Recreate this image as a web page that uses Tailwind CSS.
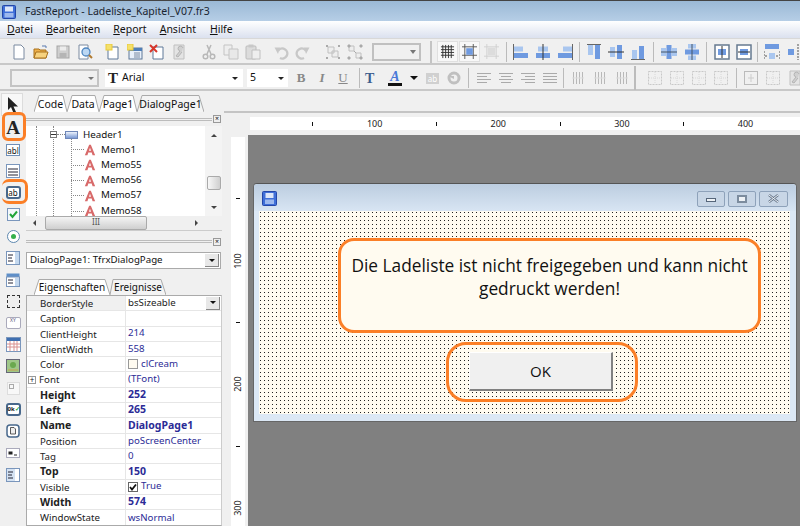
<!DOCTYPE html>
<html lang="de">
<head>
  <meta charset="UTF-8" />
  <title>FastReport</title>
  <script src="https://cdn.jsdelivr.net/npm/@tailwindcss/browser@4"></script>
</head>
<body class="relative w-[800px] h-[526px] overflow-hidden bg-[#f0f0f0] text-[#111] font-['Noto_Sans',sans-serif] text-[10.5px]">

  <!-- Title bar -->
  <div class="h-[21px] flex items-center gap-[9px] pl-[2px] pt-[1px] border-t border-[#444] bg-gradient-to-b from-[#9bb9d6] to-[#b6cee6]">
    <svg class="w-[14px] h-[14px]" viewBox="0 0 14 14"><rect x=".5" y=".5" width="13" height="13" rx="1" fill="#3f6fd8" stroke="#2346a8"/><rect x="3" y="1.5" width="8" height="5" fill="#dce6f8"/><rect x="2.5" y="8" width="9" height="4.5" fill="#9db9ee"/></svg>
    <span class="text-[#1a2430] text-[10.5px]">FastReport - Ladeliste_Kapitel_V07.fr3</span>
  </div>

  <!-- Menu -->
  <div class="h-[17px] flex items-center gap-[13px] pl-[7px] bg-gradient-to-b from-white to-[#dbe1ef] text-[10.5px]">
    <span><u>D</u>atei</span><span><u>B</u>earbeiten</span><span><u>R</u>eport</span><span><u>A</u>nsicht</span><span class="ml-[1px]"><u>H</u>ilfe</span>
  </div>

  <svg class="hidden">
    <symbol id="doc" viewBox="0 0 16 16"><path d="M3 1h7l3 3v11H3z" fill="#fff" stroke="#7a8aa0"/></symbol>
    <symbol id="open" viewBox="0 0 16 16"><path d="M1 5h5l1 1h6v8H1z" fill="#eeb04a" stroke="#a8711c"/><path d="M1 14l2-6h12l-2 6z" fill="#f7d27e" stroke="#a8711c"/><path d="M9 2h4v2" fill="none" stroke="#5a7ab0"/></symbol>
    <symbol id="save" viewBox="0 0 16 16"><rect x="2" y="2" width="12" height="12" fill="#cfcfcf" stroke="#a5a5a5"/><rect x="5" y="2.5" width="6" height="4" fill="#ececec"/><rect x="4.500" y="9" width="7" height="5" fill="#b5b5b5"/></symbol>
    <symbol id="find" viewBox="0 0 16 16"><path d="M2 1h9v14H2z" fill="#fff" stroke="#7a8aa0"/><circle cx="9" cy="8" r="4" fill="#bcd8f4" stroke="#4f86c0" stroke-width="1.300"/><path d="M12 11l3 3" stroke="#b07a30" stroke-width="2"/></symbol>
    <symbol id="newp" viewBox="0 0 16 16"><path d="M3 3h10v12H3z" fill="#fff" stroke="#5f7898"/><rect x="1" y="0" width="6" height="6" fill="#f4e06a" stroke="#e8c93c"/></symbol>
    <symbol id="newd" viewBox="0 0 16 16"><rect x="2" y="4" width="13" height="11" fill="#e8f0fa" stroke="#5f7898"/><rect x="2" y="4" width="13" height="3" fill="#4f7fb8"/><path d="M7 9h6M7 11h6M7 13h6" stroke="#7a8aa0"/><rect x="0" y="0" width="6" height="6" fill="#f4e06a" stroke="#e8c93c"/></symbol>
    <symbol id="delp" viewBox="0 0 16 16"><path d="M4 3h10v12H4z" fill="#fff" stroke="#5f7898"/><path d="M1 1l7 7M8 1L1 8" stroke="#d8362a" stroke-width="2"/></symbol>
    <symbol id="setup" viewBox="0 0 16 16"><path d="M3 1h10v14H3z" fill="#e4e4e4" stroke="#c0c0c0"/><path d="M12 4a2.500 2.500 0 1 0-3 3l-4 5 2 1 4-5" fill="#d0d0d0" stroke="#b4b4b4"/></symbol>
    <symbol id="cut" viewBox="0 0 16 16"><path d="M10 1L6 10M6 1l4 9" stroke="#b8b8b8" stroke-width="1.500"/><circle cx="4.500" cy="12.500" r="2.300" fill="none" stroke="#b8b8b8" stroke-width="1.500"/><circle cx="11.500" cy="12.500" r="2.300" fill="none" stroke="#b8b8b8" stroke-width="1.500"/></symbol>
    <symbol id="copy" viewBox="0 0 16 16"><path d="M1 1h8v10H1z" fill="#eee" stroke="#c4c4c4"/><path d="M6 5h9v10H6z" fill="#e8e8e8" stroke="#c4c4c4"/></symbol>
    <symbol id="paste" viewBox="0 0 16 16"><rect x="1" y="2" width="10" height="13" rx="1" fill="#dcdcdc" stroke="#bcbcbc"/><path d="M7 6h8v9H7z" fill="#eee" stroke="#c0c0c0"/><rect x="3.500" y="0.500" width="5" height="3" fill="#c8c8c8"/></symbol>
    <symbol id="undo" viewBox="0 0 16 16"><path d="M5 7a5 5 0 1 1 2 7" fill="none" stroke="#c8c8c8" stroke-width="2.400"/><path d="M1.500 3.500L7 3.500 5 10z" fill="#c8c8c8"/></symbol>
    <symbol id="redo" viewBox="0 0 16 16"><path d="M11 7a5 5 0 1 0-2 7" fill="none" stroke="#c8c8c8" stroke-width="2.400"/><path d="M14.500 3.500L9 3.500 11 10z" fill="#c8c8c8"/></symbol>
    <symbol id="grp" viewBox="0 0 16 16"><path d="M3 3h6v6H3zM7 7h6v6H7z" fill="#eee" stroke="#c0c0c0"/><path d="M1 1h2v2H1zM13 1h2v2h-2zM1 13h2v2H1zM13 13h2v2h-2z" fill="#aaa"/></symbol>
    <symbol id="ungrp" viewBox="0 0 16 16"><path d="M2 2h5v5H2zM9 9h5v5H9z" fill="#eee" stroke="#c0c0c0"/><path d="M7 7l2 2M1 1h2v2H1zM13 1h2v2h-2zM1 13h2v2H1zM13 13h2v2h-2z" fill="#aaa" stroke="#aaa"/></symbol>
    <symbol id="grid" viewBox="0 0 16 16"><path d="M3 1v14M6 1v14M9 1v14M12 1v14M1 3h14M1 6h14M1 9h14M1 12h14" stroke="#333"/></symbol>
    <symbol id="galign" viewBox="0 0 16 16"><path d="M3 0v16M12 0v16M0 3h16M0 12h16" stroke="#555"/><rect x="4.500" y="4.500" width="7" height="7" fill="#6f9ae0"/></symbol>
    <symbol id="gfit" viewBox="0 0 16 16"><path d="M3 0v16M13 0v16M0 3h16M0 13h16" stroke="#d0d0d0"/><rect x="4" y="4" width="8" height="8" fill="#dcdcdc"/></symbol>
    <symbol id="al" viewBox="0 0 16 16"><path d="M.5 0v16" stroke="#666"/><rect x="1" y="2.500" width="9" height="5" fill="#a9c6ef"/><rect x="1" y="9" width="14" height="5" fill="#6f9ae0"/></symbol>
    <symbol id="ac" viewBox="0 0 16 16"><rect x="3" y="2.500" width="10" height="5" fill="#a9c6ef"/><rect x="1" y="9" width="14" height="5" fill="#6f9ae0"/><path d="M8 0v16" stroke="#333"/></symbol>
    <symbol id="ar" viewBox="0 0 16 16"><path d="M15.500 0v16" stroke="#666"/><rect x="6" y="2.500" width="9" height="5" fill="#a9c6ef"/><rect x="1" y="9" width="14" height="5" fill="#6f9ae0"/></symbol>
    <symbol id="at" viewBox="0 0 16 16"><path d="M1 .5h14" stroke="#666"/><rect x="2" y="1" width="5" height="10" fill="#a9c6ef"/><rect x="9" y="1" width="5" height="14" fill="#6f9ae0"/></symbol>
    <symbol id="am" viewBox="0 0 16 16"><rect x="2" y="3" width="5" height="10" fill="#a9c6ef"/><rect x="9" y="1" width="5" height="14" fill="#6f9ae0"/><path d="M0 8h16" stroke="#333"/></symbol>
    <symbol id="ab" viewBox="0 0 16 16"><path d="M1 15.500h14" stroke="#666"/><rect x="2" y="6" width="5" height="9" fill="#a9c6ef"/><rect x="9" y="2" width="5" height="13" fill="#6f9ae0"/></symbol>
    <symbol id="sh" viewBox="0 0 16 16"><rect x="0" y="4" width="5" height="8" fill="#a9c6ef"/><rect x="5.500" y="1" width="5" height="14" fill="#6f9ae0"/><rect x="11" y="4" width="5" height="8" fill="#a9c6ef"/><path d="M0 8h16" stroke="#456"/></symbol>
    <symbol id="sv" viewBox="0 0 16 16"><rect x="4" y="0" width="8" height="4.500" fill="#a9c6ef"/><rect x="1" y="5.500" width="14" height="5" fill="#6f9ae0"/><rect x="4" y="11.500" width="8" height="4.500" fill="#a9c6ef"/><path d="M8 0v16" stroke="#456"/></symbol>
    <symbol id="fh" viewBox="0 0 16 16"><rect x="1" y="1" width="14" height="14" fill="#fff" stroke="#667a90" stroke-width="1.500"/><rect x="4" y="5" width="8" height="6" fill="#6f9ae0"/><path d="M8 2v12" stroke="#333"/></symbol>
    <symbol id="fv" viewBox="0 0 16 16"><rect x="1" y="1" width="14" height="14" fill="#fff" stroke="#667a90" stroke-width="1.500"/><rect x="4" y="5" width="8" height="6" fill="#6f9ae0"/><path d="M2 8h12" stroke="#333"/></symbol>
    <symbol id="sw" viewBox="0 0 16 16"><rect x="1" y="0" width="14" height="5" fill="#6f9ae0"/><rect x="5" y="9" width="6" height="6" fill="#a9c6ef"/><path d="M0 7v8M16 7v8M1 12h3M12 12h3" stroke="#555" stroke-dasharray="2 1"/></symbol>
    <symbol id="sr" viewBox="0 0 16 16"><rect x="3" y="5" width="6" height="6" fill="#6f9ae0"/><path d="M13 0v16" stroke="#555" stroke-dasharray="2 1"/></symbol>
    <symbol id="lines" viewBox="0 0 16 16"><path d="M1 3.500h14M1 6.500h10M1 9.500h14M1 12.500h10" stroke="#aaa"/></symbol>
    <symbol id="linec" viewBox="0 0 16 16"><path d="M1 3.500h14M3 6.500h10M1 9.500h14M3 12.500h10" stroke="#aaa"/></symbol>
    <symbol id="liner" viewBox="0 0 16 16"><path d="M1 3.500h14M5 6.500h10M1 9.500h14M5 12.500h10" stroke="#aaa"/></symbol>
    <symbol id="linej" viewBox="0 0 16 16"><path d="M1 3.500h14M1 6.500h14M1 9.500h14M1 12.500h14" stroke="#aaa"/></symbol>
    <symbol id="bars" viewBox="0 0 16 16"><path d="M3.500 2v12M6.500 2v12M9.500 2v12M12.500 2v12" stroke="#b8b8b8"/><path d="M2 8h12" stroke="#ddd"/></symbol>
    <symbol id="frame" viewBox="0 0 16 16"><rect x="1.500" y="1.500" width="13" height="13" fill="none" stroke="#c8c8c8" stroke-dasharray="2 1"/><path d="M8 2v12M2 8h12" stroke="#d8d8d8" stroke-dasharray="1 1"/></symbol>
    <symbol id="frame2" viewBox="0 0 16 16"><rect x="1.500" y="1.500" width="13" height="13" fill="none" stroke="#bbb"/><path d="M8 4v8M5 8h6" stroke="#ccc"/></symbol>
    <symbol id="redA" viewBox="0 0 14 14"><path d="M1 13L6 1h2l5 12h-3l-1-3H5l-1 3zM5.800 8h2.400L7 4.500z" fill="#d86a6a"/></symbol>
  </svg>

  <!-- Toolbar 1 -->
  <div class="h-[27px] flex items-center border-t border-[#d8d8d8] border-b-2 border-b-[#c8c8c8] bg-[#f0f0f0] pl-[5px] pt-[1px]">
    <div class="w-[2px] h-[22px] bg-[#c4c4c4] mr-[6px]"></div>
    <div class="flex gap-[6px]">
      <svg class="w-4 h-4"><use href="#doc"/></svg><svg class="w-4 h-4"><use href="#open"/></svg><svg class="w-4 h-4"><use href="#save"/></svg><svg class="w-4 h-4"><use href="#find"/></svg>
    </div>
    <div class="w-px h-[20px] bg-[#bbb] mx-[6px]"></div>
    <div class="flex gap-[6px]">
      <svg class="w-4 h-4"><use href="#newp"/></svg><svg class="w-4 h-4"><use href="#newd"/></svg><svg class="w-4 h-4"><use href="#delp"/></svg><svg class="w-4 h-4"><use href="#setup"/></svg>
    </div>
    <div class="w-px h-[20px] bg-[#bbb] mx-[7px]"></div>
    <div class="flex gap-[6px]">
      <svg class="w-4 h-4"><use href="#cut"/></svg><svg class="w-4 h-4"><use href="#copy"/></svg><svg class="w-4 h-4"><use href="#paste"/></svg>
    </div>
    <div class="w-px h-[20px] bg-[#bbb] mx-[6px]"></div>
    <div class="flex gap-[6px]">
      <svg class="w-4 h-4"><use href="#undo"/></svg><svg class="w-4 h-4"><use href="#redo"/></svg>
    </div>
    <div class="w-px h-[20px] bg-[#bbb] mx-[7px]"></div>
    <div class="flex gap-[6px]">
      <svg class="w-4 h-4"><use href="#grp"/></svg><svg class="w-4 h-4"><use href="#ungrp"/></svg>
    </div>
    <div class="w-px h-[20px] bg-[#bbb] ml-[7px] mr-[2px]"></div>
    <div class="w-[49px] h-[18px] border-2 border-[#c0c0c0] bg-[#f0f0f0] flex items-center justify-end pr-[3px] shrink-0"><div class="border-x-[3px] border-x-transparent border-t-[4px] border-t-[#777]"></div></div>
    <div class="w-[2px] h-[22px] bg-[#c4c4c4] ml-[9px] mr-[5px] shrink-0"></div>
    <div class="flex gap-[1px] items-center shrink-0">
      <div class="w-[21px] h-[21px] flex items-center justify-center bg-[#f8f8f8] border border-[#e0e0e0]"><svg class="w-[15px] h-[15px]"><use href="#grid"/></svg></div>
      <div class="w-[21px] h-[21px] flex items-center justify-center bg-[#f8f8f8] border border-[#e0e0e0]"><svg class="w-[15px] h-[15px]"><use href="#galign"/></svg></div>
      <div class="w-[21px] h-[21px] flex items-center justify-center"><svg class="w-[15px] h-[15px]"><use href="#gfit"/></svg></div>
    </div>
    <div class="w-px h-[20px] bg-[#bbb] ml-[4px] mr-[6px] shrink-0"></div>
    <div class="flex gap-[6px] shrink-0">
      <svg class="w-4 h-4"><use href="#al"/></svg><svg class="w-4 h-4"><use href="#ac"/></svg><svg class="w-4 h-4"><use href="#ar"/></svg>
    </div>
    <div class="w-px h-[20px] bg-[#bbb] mx-[6px] shrink-0"></div>
    <div class="flex gap-[6px] shrink-0">
      <svg class="w-4 h-4"><use href="#at"/></svg><svg class="w-4 h-4"><use href="#am"/></svg><svg class="w-4 h-4"><use href="#ab"/></svg>
    </div>
    <div class="w-px h-[20px] bg-[#bbb] mx-[7px] shrink-0"></div>
    <div class="flex gap-[7px] shrink-0">
      <svg class="w-4 h-4"><use href="#sh"/></svg><svg class="w-4 h-4"><use href="#sv"/></svg>
    </div>
    <div class="w-px h-[20px] bg-[#bbb] ml-[6px] mr-[7px] shrink-0"></div>
    <div class="flex gap-[6px] shrink-0">
      <svg class="w-4 h-4"><use href="#fh"/></svg><svg class="w-4 h-4"><use href="#fv"/></svg>
    </div>
    <div class="w-px h-[20px] bg-[#bbb] ml-[5px] mr-[6px] shrink-0"></div>
    <div class="flex gap-[5px] shrink-0">
      <svg class="w-4 h-4 shrink-0"><use href="#sw"/></svg><svg class="w-4 h-4 shrink-0"><use href="#sr"/></svg>
    </div>
  </div>

  <!-- Toolbar 2 -->
  <div class="h-[26px] flex items-center border-b-2 border-b-[#c8c8c8] bg-[#f0f0f0] pl-[10px] pt-[2px]">
    <div class="w-[89px] h-[18px] border-2 border-[#c4c4c4] flex items-center justify-end pr-[3px] shrink-0"><div class="border-x-[3px] border-x-transparent border-t-[3px] border-t-[#777]"></div></div>
    <div class="w-[138px] h-[18px] ml-[6px] bg-white flex items-center pl-[3px] pr-[5px] shrink-0">
      <span class="font-['Liberation_Serif',serif] font-bold text-[15px] text-[#222] w-[14px]">T</span>
      <span class="flex-1">Arial</span>
      <div class="border-x-[3px] border-x-transparent border-t-[3px] border-t-[#222]"></div>
    </div>
    <div class="w-[41px] h-[18px] ml-[4px] bg-white flex items-center pl-[3px] pr-[4px] shrink-0">
      <span class="flex-1">5</span>
      <div class="border-x-[3px] border-x-transparent border-t-[3px] border-t-[#222]"></div>
    </div>
    <div class="flex items-center gap-[11px] ml-[8px] text-[13px] text-[#888] font-['Liberation_Serif',serif] shrink-0">
      <b class="w-[10px] text-center">B</b><i class="w-[10px] text-center font-bold">I</i><u class="w-[10px] text-center">U</u>
    </div>
    <div class="w-px h-[20px] bg-[#bbb] ml-[11px] mr-[5px] shrink-0"></div>
    <span class="w-[14px] font-['Liberation_Serif',serif] font-bold text-[14px] text-[#3d5f8f] shrink-0">T</span>
    <div class="ml-[9px] w-[14px] flex flex-col items-center shrink-0">
      <span class="font-['Liberation_Serif',serif] font-bold italic text-[14px] leading-[12px] text-[#4a78d8]">A</span>
      <div class="w-[14px] h-[3px] bg-[#111]"></div>
    </div>
    <div class="ml-[8px] border-x-[4px] border-x-transparent border-t-[4px] border-t-[#111] shrink-0"></div>
    <div class="ml-[8px] w-[13px] h-[11px] bg-[#d0d0d0] text-white text-[8px] leading-[11px] text-center shrink-0">ab</div>
    <svg class="ml-[8px] w-[14px] h-[14px] shrink-0" viewBox="0 0 14 14"><circle cx="7" cy="7" r="5" fill="none" stroke="#c0c0c0" stroke-width="3"/><path d="M1 5h6v3z" fill="#c0c0c0"/></svg>
    <div class="w-px h-[20px] bg-[#bbb] ml-[7px] mr-[7px] shrink-0"></div>
    <div class="flex gap-[6px] shrink-0">
      <svg class="w-4 h-4"><use href="#lines"/></svg><svg class="w-4 h-4"><use href="#linec"/></svg><svg class="w-4 h-4"><use href="#liner"/></svg><svg class="w-4 h-4"><use href="#linej"/></svg>
    </div>
    <div class="w-px h-[20px] bg-[#bbb] ml-[5px] mr-[6px] shrink-0"></div>
    <div class="flex gap-[6px] shrink-0">
      <svg class="w-4 h-4"><use href="#bars"/></svg><svg class="w-4 h-4"><use href="#bars"/></svg><svg class="w-4 h-4"><use href="#bars"/></svg>
    </div>
    <div class="w-[2px] h-[24px] bg-[#bcbcbc] ml-[4px] mr-[11px] shrink-0"></div>
    <div class="flex gap-[6px] shrink-0">
      <svg class="w-4 h-4"><use href="#frame"/></svg><svg class="w-4 h-4"><use href="#frame"/></svg><svg class="w-4 h-4"><use href="#frame"/></svg><svg class="w-4 h-4"><use href="#frame"/></svg>
    </div>
    <div class="w-px h-[20px] bg-[#bbb] ml-[7px] mr-[6px] shrink-0"></div>
    <div class="flex gap-[6px] shrink-0">
      <svg class="w-4 h-4 shrink-0"><use href="#frame2"/></svg><svg class="w-4 h-4 shrink-0"><use href="#frame"/></svg><svg class="w-4 h-4 shrink-0"><use href="#setup"/></svg>
    </div>
  </div>

  <!-- Tab strip + main area -->
  <div class="flex h-[435px]">

    <!-- Tool column -->
    <div class="w-[26px] flex flex-col items-center shrink-0 pt-[2px]">
      <div class="w-[22px] h-[23px] ml-[-2px] flex items-center justify-center bg-[#f8f8f8] border border-[#dcdcdc]">
        <svg class="w-[14px] h-[16px]" viewBox="0 0 14 16"><path d="M3 0v13l3-3 2.500 6 2.500-1-2.500-5.500H13z" fill="#222"/></svg>
      </div>
      <div class="h-[21.700px] mt-[1px] flex items-center justify-center font-['Liberation_Serif',serif] font-bold text-[19px] text-[#222]">A</div>
      <div class="h-[21.700px] flex items-center justify-center"><span class="block w-[14px] h-[12px] bg-white border border-[#6f8fb8] text-[8px] leading-[11px] text-center">abl</span></div>
      <div class="h-[21.700px] flex items-center justify-center"><svg class="w-[14px] h-[14px]" viewBox="0 0 14 14"><rect x=".5" y=".5" width="13" height="13" fill="#fff" stroke="#7a96bc"/><path d="M2 5h10M2 8h10M2 11h10" stroke="#223"/></svg></div>
      <div class="h-[21.700px] flex items-center justify-center"><span class="block w-[15px] h-[13px] bg-white border-2 border-[#48688c] rounded-[3px] text-[8px] leading-[9px] text-center">ab</span></div>
      <div class="h-[21.700px] flex items-center justify-center"><svg class="w-[13px] h-[13px]" viewBox="0 0 13 13"><rect x=".5" y=".5" width="12" height="12" fill="#f4f8fc" stroke="#7a96bc"/><path d="M3 6l2.500 3L10 3.500" fill="none" stroke="#22a53a" stroke-width="2"/></svg></div>
      <div class="h-[21.700px] flex items-center justify-center"><svg class="w-[13px] h-[13px]" viewBox="0 0 13 13"><circle cx="6.500" cy="6.500" r="6" fill="#fff" stroke="#5d87ae"/><circle cx="6.500" cy="6.500" r="2.500" fill="#35b04c"/></svg></div>
      <div class="h-[21.700px] flex items-center justify-center"><svg class="w-[14px] h-[14px]" viewBox="0 0 14 14"><rect x=".5" y=".5" width="13" height="13" fill="#fff" stroke="#7a96bc"/><path d="M2 4h5M2 7h4M2 10h5" stroke="#223"/><rect x="9" y="1" width="4" height="12" fill="#c4d8ee"/></svg></div>
      <div class="h-[21.700px] flex items-center justify-center"><svg class="w-[14px] h-[14px]" viewBox="0 0 14 14"><rect x=".5" y=".5" width="13" height="3.500" fill="#5f8fc8"/><rect x=".5" y="4" width="13" height="9.500" fill="#fff" stroke="#7a96bc"/><path d="M2 7h5M2 10h5" stroke="#223"/><rect x="9" y="5" width="4" height="8" fill="#c4d8ee"/></svg></div>
      <div class="h-[21.700px] flex items-center justify-center"><div class="w-[13px] h-[13px] border border-dashed border-[#333] bg-[#eee]"></div></div>
      <div class="h-[21.700px] flex items-center justify-center"><div class="w-[15px] h-[12px] border border-[#aab] rounded-[2px] bg-white text-[5px] leading-[5px] text-[#557] text-center">XY</div></div>
      <div class="h-[21.700px] flex items-center justify-center"><svg class="w-[15px] h-[15px]" viewBox="0 0 15 15"><rect x=".5" y=".5" width="14" height="14" fill="#fff" stroke="#7a96bc"/><rect x="1" y="1" width="13" height="3" fill="#3f6fb0"/><path d="M1 7h13M1 10h13M4 4v10M8 4v10M11 4v10" stroke="#d89090"/></svg></div>
      <div class="h-[21.700px] flex items-center justify-center"><svg class="w-[14px] h-[14px]" viewBox="0 0 14 14"><rect x=".5" y=".5" width="13" height="13" fill="#9fc78a" stroke="#667"/><circle cx="7" cy="6" r="3" fill="#6aa84f"/><path d="M2 11h10" stroke="#c8a048"/></svg></div>
      <div class="h-[21.700px] flex items-center justify-center"><div class="w-[13px] h-[13px] bg-[#f8f8f8] border border-[#ddd]"><div class="w-[5px] h-[5px] ml-[1px] mt-[1px] border border-[#aaa]"></div></div></div>
      <div class="h-[21.700px] flex items-center justify-center"><span class="block w-[15px] h-[13px] bg-white border-2 border-[#48688c] rounded-[3px] text-[6px] leading-[9px] text-center font-bold">0k<span class="text-[#22a53a]">✓</span></span></div>
      <div class="h-[21.700px] flex items-center justify-center"><svg class="w-[14px] h-[14px]" viewBox="0 0 14 14"><rect x="1" y="1" width="12" height="12" rx="3" fill="#fff" stroke="#48688c" stroke-width="1.500"/><path d="M4.500 3.500h3.500l1.500 1.500v5h-5z" fill="#eee" stroke="#333" stroke-width=".8"/></svg></div>
      <div class="h-[21.700px] flex items-center justify-center"><svg class="w-[14px] h-[14px]" viewBox="0 0 14 14"><rect x=".5" y="2.500" width="13" height="9" fill="#fff" stroke="#aab"/><rect x="2.500" y="5.500" width="4" height="3" fill="#222"/><path d="M8 9h3" stroke="#222"/></svg></div>
      <div class="h-[21.700px] flex items-center justify-center"><svg class="w-[14px] h-[14px]" viewBox="0 0 14 14"><rect x=".5" y=".5" width="13" height="13" fill="#d4e2f2" stroke="#7a96bc"/><path d="M2 4h5M2 7h4M2 10h5" stroke="#223"/><rect x="9" y="1" width="4" height="12" fill="#fff"/></svg></div>
    </div>

    <!-- Left panels -->
    <div class="w-[196px] shrink-0 flex flex-col">
      <!-- Tabs -->
      <div class="h-[21px] flex items-end pl-[8px]">
        <div class="relative w-[33px] h-[17px] text-center leading-[18px]"><svg class="absolute inset-0 w-full h-full" viewBox="0 0 33 17"><path d="M0 17L5 .5h24l4 16.500" fill="#fff" stroke="#aaa"/></svg><span class="relative">Code</span></div>
        <div class="relative w-[32px] h-[17px] text-center leading-[18px]"><svg class="absolute inset-0 w-full h-full" viewBox="0 0 32 17"><path d="M0 17L5 .5h23l4 16.500" fill="#fff" stroke="#aaa"/></svg><span class="relative">Data</span></div>
        <div class="relative w-[38px] h-[17px] text-center leading-[18px]"><svg class="absolute inset-0 w-full h-full" viewBox="0 0 38 17"><path d="M0 17L5 .5h29l4 16.500" fill="#fff" stroke="#aaa"/></svg><span class="relative">Page1</span></div>
        <div class="relative w-[67px] h-[17px] text-center leading-[18px]"><svg class="absolute inset-0 w-full h-full" viewBox="0 0 67 17"><path d="M0 17L5 .5h57l5 16.500" fill="#f4f4f4" stroke="#aaa"/></svg><span class="relative">DialogPage1</span></div>
      </div>

      <!-- Tree handle -->
      <div class="h-[14px] flex items-center pr-[1px]">
        <div class="flex-1 h-[3px] border-y border-[#bcbcbc]"></div>
        <div class="w-[8px] h-[8px] ml-[1px] bg-[#eee] border border-[#999] text-[7px] leading-[6px] text-center">×</div>
      </div>

      <!-- Tree -->
      <div class="h-[105px] flex flex-col border-b border-[#ccc] text-[9.8px]">
        <div class="h-[90px] flex">
          <div class="relative flex-1 bg-white overflow-hidden">
            <div class="absolute left-[10px] top-0 bottom-0 border-l border-dotted border-[#888]"></div>
            <div class="absolute left-[27px] top-0 bottom-0 border-l border-dotted border-[#888]"></div>
            <div class="absolute left-[45px] top-[12px] bottom-0 border-l border-dotted border-[#888]"></div>
            <div class="pl-[24px] pt-[1px] flex flex-col">
              <div class="h-[15.300px] flex items-center relative">
                <div class="w-[7px] h-[7px] bg-white border border-[#777] flex items-center justify-center"><div class="w-[5px] h-px bg-[#333]"></div></div>
                <div class="w-[8px] border-t border-dotted border-[#888]"></div>
                <div class="w-[13px] h-[8px] border border-[#6f87b8] bg-gradient-to-b from-[#eef3fb] to-[#7c9ad4]"></div>
                <span class="ml-[5px] leading-none">Header1</span>
              </div>
              <div class="h-[15.300px] flex items-center pl-[21px]"><div class="w-[13px] border-t border-dotted border-[#888]"></div><svg class="w-[12px] h-[12px]"><use href="#redA"/></svg><span class="ml-[5px]">Memo1</span></div>
              <div class="h-[15.300px] flex items-center pl-[21px]"><div class="w-[13px] border-t border-dotted border-[#888]"></div><svg class="w-[12px] h-[12px]"><use href="#redA"/></svg><span class="ml-[5px]">Memo55</span></div>
              <div class="h-[15.300px] flex items-center pl-[21px]"><div class="w-[13px] border-t border-dotted border-[#888]"></div><svg class="w-[12px] h-[12px]"><use href="#redA"/></svg><span class="ml-[5px]">Memo56</span></div>
              <div class="h-[15.300px] flex items-center pl-[21px]"><div class="w-[13px] border-t border-dotted border-[#888]"></div><svg class="w-[12px] h-[12px]"><use href="#redA"/></svg><span class="ml-[5px]">Memo57</span></div>
              <div class="h-[15.300px] flex items-center pl-[21px]"><div class="w-[13px] border-t border-dotted border-[#888]"></div><svg class="w-[12px] h-[12px]"><use href="#redA"/></svg><span class="ml-[5px]">Memo58</span></div>
            </div>
          </div>
          <!-- v scrollbar -->
          <div class="w-[17px] bg-[#f4f4f4] flex flex-col items-center pt-[8px] pb-[7px]">
            <div class="border-x-[3px] border-x-transparent border-b-[3px] border-b-[#444]"></div>
            <div class="w-[14px] h-[14px] mt-[39px] rounded-[2px] bg-gradient-to-r from-[#f8f8f8] to-[#cfcfcf] border border-[#aaa]"></div>
            <div class="mt-auto border-x-[3px] border-x-transparent border-t-[3px] border-t-[#444]"></div>
          </div>
        </div>
        <!-- h scrollbar -->
        <div class="h-[15px] w-[179px] bg-[#f0f0f0] flex items-center pl-[7px] pr-[7px]">
          <div class="border-y-[3px] border-y-transparent border-r-[3px] border-r-[#444]"></div>
          <div class="w-[102px] h-[14px] ml-[9px] rounded-[2px] bg-gradient-to-b from-[#f4f4f4] to-[#cfcfcf] border border-[#aaa] text-center text-[8px] leading-[10px] text-[#555]">III</div>
          <div class="ml-auto border-y-[3px] border-y-transparent border-l-[3px] border-l-[#444]"></div>
        </div>
      </div>

      <!-- Inspector handle -->
      <div class="h-[21px] flex items-center pr-[1px]">
        <div class="flex-1 h-[3px] border-y border-[#bcbcbc]"></div>
        <div class="w-[8px] h-[8px] ml-[1px] bg-[#eee] border border-[#999] text-[7px] leading-[6px] text-center">×</div>
      </div>

      <!-- Object combo -->
      <div class="h-[17px] mr-[1px] bg-white border border-[#aaa] flex items-center pl-[3px] pr-[1px] text-[9.7px]">
        <span class="flex-1">DialogPage1: TfrxDialogPage</span>
        <div class="w-[14px] h-[13px] bg-[#e8e8e8] border-r border-b border-[#888] flex items-center justify-center"><div class="border-x-[3px] border-x-transparent border-t-[3px] border-t-[#111]"></div></div>
      </div>

      <!-- Inspector tabs -->
      <div class="h-[26px] flex items-end pl-[8px] text-[10px]">
        <div class="relative w-[76px] h-[16px] text-center leading-[17px]"><svg class="absolute inset-0 w-full h-full" viewBox="0 0 76 16"><path d="M0 16L5 .5h66l5 15.500" fill="#fff" stroke="#aaa"/></svg><span class="relative">Eigenschaften</span></div>
        <div class="relative w-[56px] h-[16px] text-center leading-[17px]"><svg class="absolute inset-0 w-full h-full" viewBox="0 0 56 16"><path d="M0 16L3 .5h48l5 15.500" fill="#f4f4f4" stroke="#aaa"/></svg><span class="relative">Ereignisse</span></div>
      </div>

      <!-- Properties -->
      <div class="flex-1 border border-[#aaa] border-r-[#ccc] bg-white overflow-hidden flex flex-col divide-y divide-[#e6e6e6] text-[#222] text-[9.7px]">
        <div class="h-[15.300px] shrink-0 flex items-center"><span class="w-[99px] pl-[13px] bg-[#f0f0f0] h-full leading-[15px] border-r border-[#e6e6e6]">BorderStyle</span><span class="flex-1 pl-[2px]">bsSizeable</span><div class="w-[14px] h-[13px] mr-[1px] bg-[#e8e8e8] border-r border-b border-[#888] flex items-center justify-center"><div class="border-x-[3px] border-x-transparent border-t-[3px] border-t-[#111]"></div></div></div>
        <div class="h-[15.300px] shrink-0 flex items-center"><span class="w-[99px] pl-[13px] h-full leading-[15px] border-r border-[#e6e6e6]">Caption</span><span class="flex-1 pl-[2px] text-[#2b2b96]"></span></div>
        <div class="h-[15.300px] shrink-0 flex items-center"><span class="w-[99px] pl-[13px] h-full leading-[15px] border-r border-[#e6e6e6]">ClientHeight</span><span class="flex-1 pl-[2px] text-[#2b2b96]">214</span></div>
        <div class="h-[15.300px] shrink-0 flex items-center"><span class="w-[99px] pl-[13px] h-full leading-[15px] border-r border-[#e6e6e6]">ClientWidth</span><span class="flex-1 pl-[2px] text-[#2b2b96]">558</span></div>
        <div class="h-[15.300px] shrink-0 flex items-center"><span class="w-[99px] pl-[13px] h-full leading-[15px] border-r border-[#e6e6e6]">Color</span><span class="flex-1 pl-[2px] flex items-center gap-[3px] text-[#2b2b96]"><span class="w-[10px] h-[10px] bg-[#fffbf0] border border-[#999]"></span>clCream</span></div>
        <div class="h-[15.300px] shrink-0 flex items-center"><span class="w-[99px] pl-[1px] h-full leading-[15px] flex items-center border-r border-[#e6e6e6]"><span class="w-[8px] h-[8px] mr-[3px] border border-[#999] bg-white text-[8px] leading-[6px] text-center">+</span>Font</span><span class="flex-1 pl-[2px] text-[#2b2b96]">(TFont)</span></div>
        <div class="h-[15.300px] shrink-0 flex items-center font-bold text-[10.5px]"><span class="w-[99px] pl-[13px] h-full leading-[15px] border-r border-[#e6e6e6]">Height</span><span class="flex-1 pl-[2px] text-[#2b2b96]">252</span></div>
        <div class="h-[15.300px] shrink-0 flex items-center font-bold text-[10.5px]"><span class="w-[99px] pl-[13px] h-full leading-[15px] border-r border-[#e6e6e6]">Left</span><span class="flex-1 pl-[2px] text-[#2b2b96]">265</span></div>
        <div class="h-[15.300px] shrink-0 flex items-center font-bold text-[10.5px]"><span class="w-[99px] pl-[13px] h-full leading-[15px] border-r border-[#e6e6e6]">Name</span><span class="flex-1 pl-[2px] text-[#2b2b96]">DialogPage1</span></div>
        <div class="h-[15.300px] shrink-0 flex items-center"><span class="w-[99px] pl-[13px] h-full leading-[15px] border-r border-[#e6e6e6]">Position</span><span class="flex-1 pl-[2px] text-[#2b2b96]">poScreenCenter</span></div>
        <div class="h-[15.300px] shrink-0 flex items-center"><span class="w-[99px] pl-[13px] h-full leading-[15px] border-r border-[#e6e6e6]">Tag</span><span class="flex-1 pl-[2px] text-[#2b2b96]">0</span></div>
        <div class="h-[15.300px] shrink-0 flex items-center font-bold text-[10.5px]"><span class="w-[99px] pl-[13px] h-full leading-[15px] border-r border-[#e6e6e6]">Top</span><span class="flex-1 pl-[2px] text-[#2b2b96]">150</span></div>
        <div class="h-[15.300px] shrink-0 flex items-center"><span class="w-[99px] pl-[13px] h-full leading-[15px] border-r border-[#e6e6e6]">Visible</span><span class="flex-1 pl-[2px] flex items-center gap-[3px] text-[#2b2b96]"><svg class="w-[10px] h-[10px]" viewBox="0 0 10 10"><rect x=".5" y=".5" width="9" height="9" fill="#fff" stroke="#666"/><path d="M2 5l2 2.500L8 2.500" fill="none" stroke="#111" stroke-width="1.800"/></svg>True</span></div>
        <div class="h-[15.300px] shrink-0 flex items-center font-bold text-[10.5px]"><span class="w-[99px] pl-[13px] h-full leading-[15px] border-r border-[#e6e6e6]">Width</span><span class="flex-1 pl-[2px] text-[#2b2b96]">574</span></div>
        <div class="h-[15.300px] shrink-0 flex items-center"><span class="w-[99px] pl-[13px] h-full leading-[15px] border-r border-[#e6e6e6]">WindowState</span><span class="flex-1 pl-[2px] text-[#2b2b96]">wsNormal</span></div>
      </div>
    </div>

    <!-- Designer -->
    <div class="flex-1 flex flex-col min-w-0">
      <div class="h-[22px] ml-[2px] border-b-2 border-b-[#c4c4c4] bg-[#f0f0f0]"></div>
      <!-- Top ruler -->
      <div class="h-[22px] pl-[28px] pt-[4px] bg-[#f0f0f0]">
        <div class="h-[13px] bg-white flex items-center pl-[32px] text-[#222] text-[9px] overflow-hidden">
          <div class="w-[61.800px] shrink-0 flex justify-center"><div class="w-px h-[4px] bg-[#111]"></div></div>
          <div class="w-[61.800px] shrink-0 text-center">100</div>
          <div class="w-[61.800px] shrink-0 flex justify-center"><div class="w-px h-[4px] bg-[#111]"></div></div>
          <div class="w-[61.800px] shrink-0 text-center">200</div>
          <div class="w-[61.800px] shrink-0 flex justify-center"><div class="w-px h-[4px] bg-[#111]"></div></div>
          <div class="w-[61.800px] shrink-0 text-center">300</div>
          <div class="w-[61.800px] shrink-0 flex justify-center"><div class="w-px h-[4px] bg-[#111]"></div></div>
          <div class="w-[61.800px] shrink-0 text-center">400</div>
        </div>
      </div>
      <div class="flex-1 flex min-h-0">
        <!-- Side ruler -->
        <div class="w-[26px] shrink-0 pl-[9px] pr-[3px] pt-[2px]">
          <div class="h-full bg-white flex flex-col items-center pt-[31px] text-[9px] text-[#222] overflow-hidden">
            <div class="h-[61.800px] shrink-0 flex items-center"><div class="w-[4px] h-px bg-[#111]"></div></div>
            <div class="h-[61.800px] shrink-0 flex items-center [writing-mode:vertical-rl] rotate-180 justify-center">100</div>
            <div class="h-[61.800px] shrink-0 flex items-center"><div class="w-[4px] h-px bg-[#111]"></div></div>
            <div class="h-[61.800px] shrink-0 flex items-center [writing-mode:vertical-rl] rotate-180 justify-center">200</div>
            <div class="h-[61.800px] shrink-0 flex items-center"><div class="w-[4px] h-px bg-[#111]"></div></div>
            <div class="h-[61.800px] shrink-0 flex items-center [writing-mode:vertical-rl] rotate-180 justify-center">300</div>
          </div>
        </div>
        <!-- Workspace -->
        <div class="flex-1 bg-[#808080] pl-[5px] pt-[48px] pr-[3px] min-w-0">
          <!-- Dialog -->
          <div class="h-[239px] rounded-t-[4px] border border-[#666] border-t-[#555] bg-[#dce8f5] flex flex-col">
            <div class="h-[27px] shrink-0 flex items-center justify-between pl-[8px] pr-[8px] pt-[2px] rounded-t-[4px] bg-gradient-to-b from-[#bccde0] to-[#d8e5f3]">
              <svg class="w-[15px] h-[15px]" viewBox="0 0 15 15"><rect x=".5" y=".5" width="14" height="14" rx="1" fill="#3f6fd8" stroke="#2346a8"/><rect x="3.500" y="2" width="8" height="5" fill="#dce6f8"/><rect x="3" y="8.500" width="9" height="4.500" fill="#9db9ee"/></svg>
              <div class="flex gap-[3px]">
                <div class="w-[28px] h-[16px] rounded-[2px] border border-[#8ea2ba] bg-[#c8d6e6] flex items-center justify-center"><div class="w-[10px] h-[4px] mt-[2px] bg-[#eef2f6] border border-[#56667a]"></div></div>
                <div class="w-[28px] h-[16px] rounded-[2px] border border-[#8ea2ba] bg-[#c8d6e6] flex items-center justify-center"><div class="w-[10px] h-[8px] bg-[#eef2f6] border-2 border-[#7c8c9e]"></div></div>
                <div class="w-[29px] h-[16px] rounded-[2px] border border-[#8ea2ba] bg-[#c8d6e6] flex items-center justify-center"><svg class="w-[11px] h-[9px]" viewBox="0 0 11 9"><path d="M1 1l9 7M10 1L1 8" stroke="#66768a" stroke-width="2.400"/><path d="M1 1l9 7M10 1L1 8" stroke="#eef2f6" stroke-width="1"/></svg></div>
              </div>
            </div>
            <!-- Client area -->
            <div class="flex-1 ml-[5px] mr-[6px] mb-[7px] flex flex-col items-start bg-[#fffbf0] bg-[radial-gradient(circle_at_1.5px_1.5px,#222_0.5px,transparent_0.75px)] bg-[length:4px_4px]">
              <div class="w-[423px] h-[95px] mt-[27px] ml-[79px] shrink-0 rounded-[16px] border-[3px] border-[#fb7f27] bg-[#fffbf0] flex items-center justify-center pb-[17px] text-center text-[17.300px] leading-[23px] text-[#111] font-['Open_Sans',sans-serif]">
                <span>Die Ladeliste ist nicht freigegeben und kann nicht<br>gedruckt werden!</span>
              </div>
              <!-- OK button with ring -->
              <div class="w-[192px] h-[60px] mt-[9px] ml-[187px] shrink-0 rounded-[20px] border-[3px] border-[#fb7f27] flex items-center justify-center">
                <button class="w-[144px] h-[39px] mr-[2px] mb-[1px] bg-[#f0f0f0] border-r-2 border-b-2 border-[#808080] border-t border-l border-t-white border-l-white text-[15px] text-[#111] font-['Open_Sans',sans-serif]">OK</button>
              </div>
            </div>
          </div>
        </div>
      </div>
    </div>
  </div>

  <!-- Orange call-outs on the tool column -->
  <div class="absolute left-[2px] top-[112px] w-[24px] h-[29px] rounded-[6px] border-[3px] border-[#fb7f27]"></div>
  <div class="absolute left-[2px] top-[179px] w-[26px] h-[25px] rounded-[7px] border-[3px] border-[#fb7f27] border-l-0"></div>
</body>
</html>
